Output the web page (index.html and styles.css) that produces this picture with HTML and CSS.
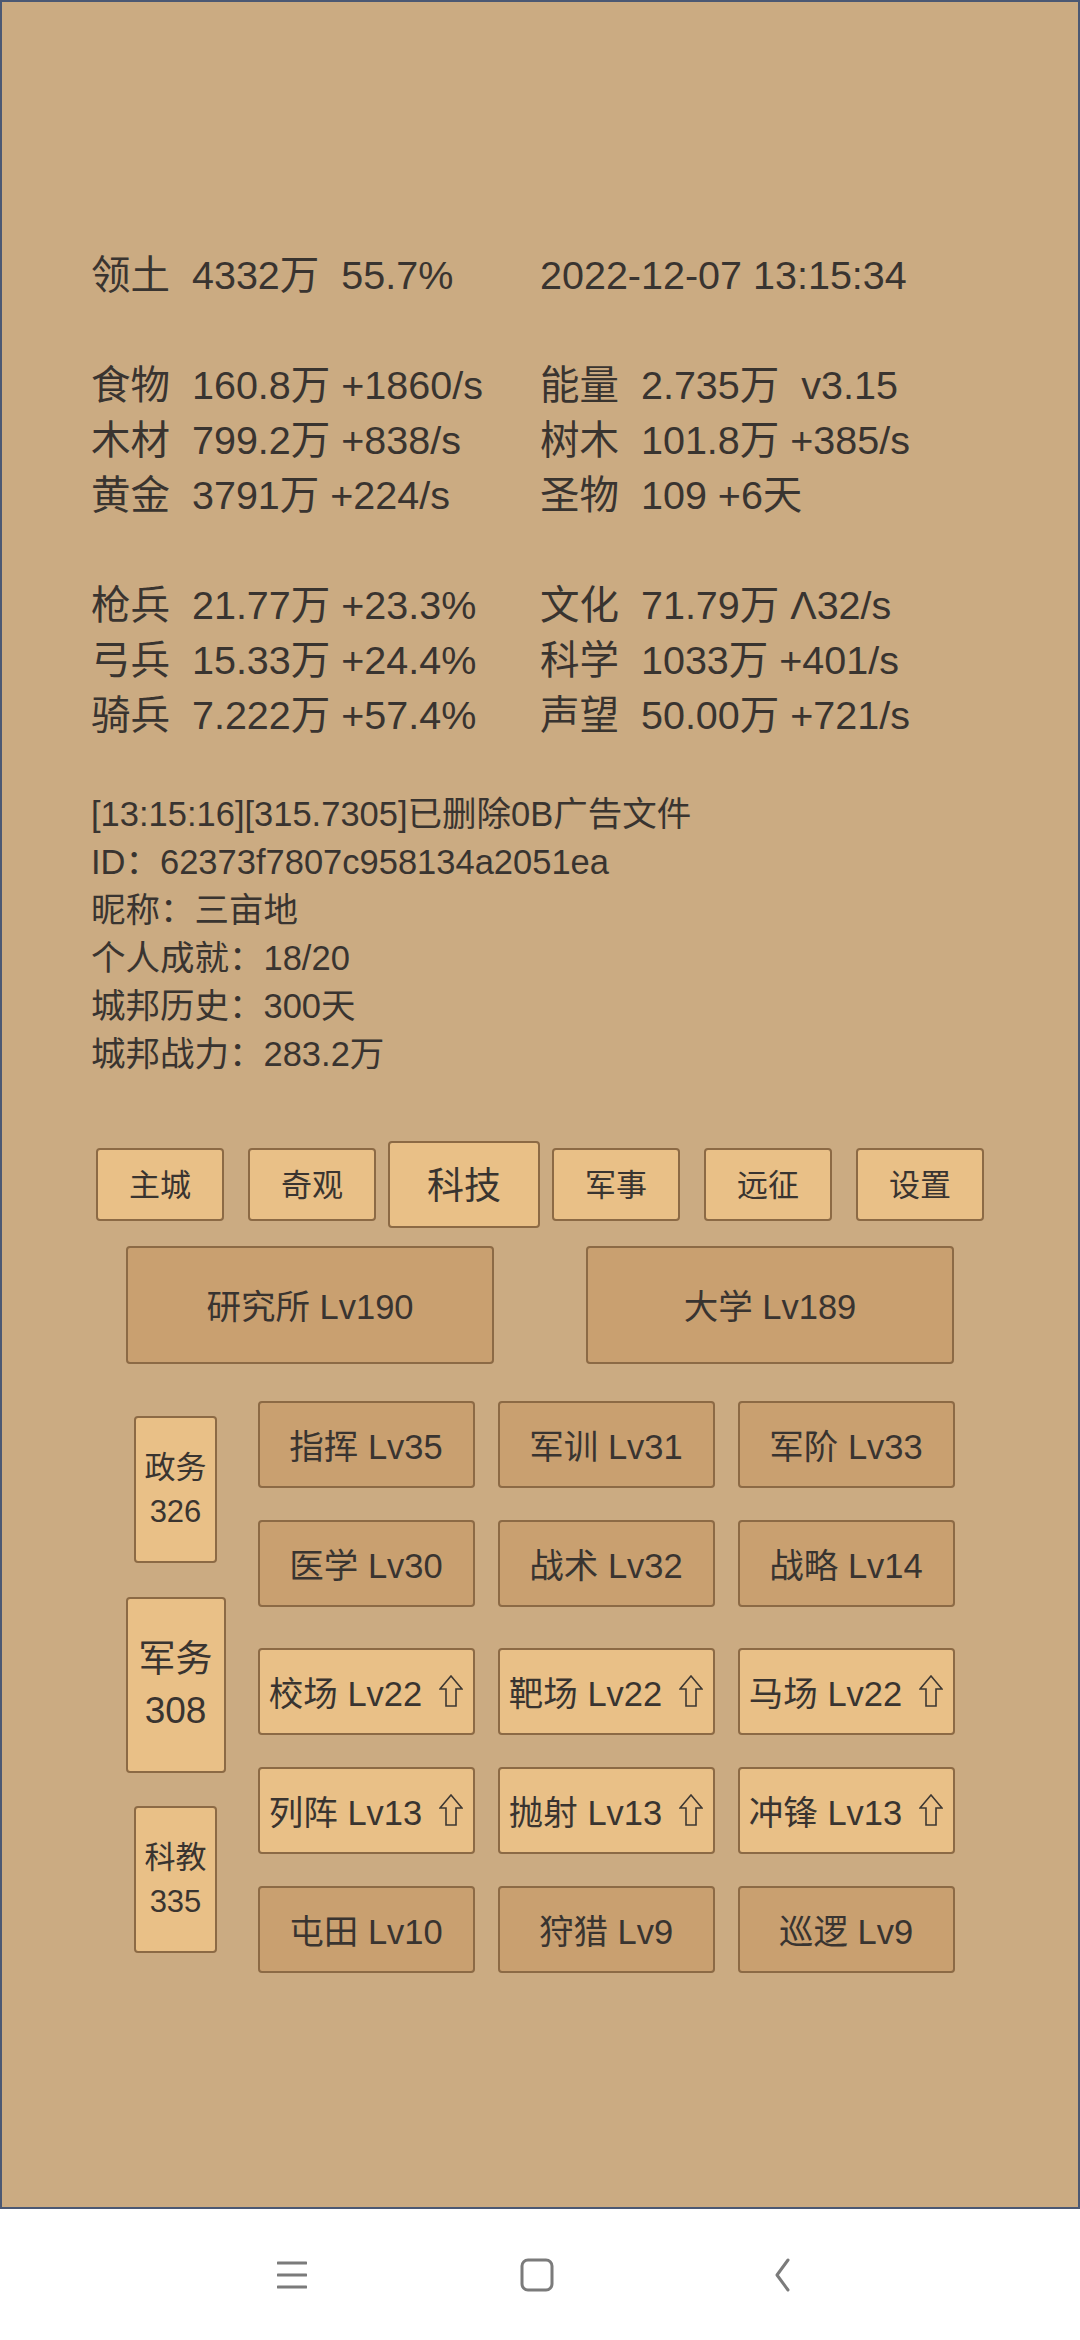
FILE: index.html
```html
<!DOCTYPE html>
<html lang="zh-CN">
<head>
  <meta charset="UTF-8">
  <title>城邦</title>
  <meta name="viewport" content="width=device-width,initial-scale=1">
  <link rel="stylesheet" href="styles.css">
</head>
<body>

<div class="panel">

  <div class="stats">
    <div class="stat-group">
      <div class="cell">领土  4332万  55.7%</div>
      <div class="cell">2022-12-07 13:15:34</div>
    </div>
    <div class="stat-group">
      <div class="cell">食物  160.8万 +1860/s</div>
      <div class="cell">能量  2.735万  v3.15</div>
      <div class="cell">木材  799.2万 +838/s</div>
      <div class="cell">树木  101.8万 +385/s</div>
      <div class="cell">黄金  3791万 +224/s</div>
      <div class="cell">圣物  109 +6天</div>
    </div>
    <div class="stat-group">
      <div class="cell">枪兵  21.77万 +23.3%</div>
      <div class="cell">文化  71.79万 Λ32/s</div>
      <div class="cell">弓兵  15.33万 +24.4%</div>
      <div class="cell">科学  1033万 +401/s</div>
      <div class="cell">骑兵  7.222万 +57.4%</div>
      <div class="cell">声望  50.00万 +721/s</div>
    </div>
  </div>

  <div class="log">
    <div>[13:15:16][315.7305]已删除0B广告文件</div>
    <div>ID：62373f7807c958134a2051ea</div>
    <div>昵称：三亩地</div>
    <div>个人成就：18/20</div>
    <div>城邦历史：300天</div>
    <div>城邦战力：283.2万</div>
  </div>

  <div class="tabs">
    <button class="tab">主城</button>
    <button class="tab">奇观</button>
    <button class="tab on">科技</button>
    <button class="tab">军事</button>
    <button class="tab">远征</button>
    <button class="tab">设置</button>
  </div>

  <div class="halls">
    <button class="btn dark hall">研究所 Lv190</button>
    <button class="btn dark hall">大学 Lv189</button>
  </div>

  <div class="lower">
    <div class="side">
      <div class="side-slot"><button class="side-btn">政务<br>326</button></div>
      <div class="side-slot"><button class="side-btn on">军务<br>308</button></div>
      <div class="side-slot"><button class="side-btn">科教<br>335</button></div>
    </div>

    <div class="skills">
      <div class="skill-grid">
        <button class="btn dark">指挥 Lv35</button>
        <button class="btn dark">军训 Lv31</button>
        <button class="btn dark">军阶 Lv33</button>
        <button class="btn dark">医学 Lv30</button>
        <button class="btn dark">战术 Lv32</button>
        <button class="btn dark">战略 Lv14</button>
      </div>
      <div class="skill-grid second">
        <button class="btn light">校场 Lv22<svg class="up" viewBox="0 0 24 32"><polygon points="12,1 23,14 17,14 17,31 7,31 7,14 1,14"/></svg></button>
        <button class="btn light">靶场 Lv22<svg class="up" viewBox="0 0 24 32"><polygon points="12,1 23,14 17,14 17,31 7,31 7,14 1,14"/></svg></button>
        <button class="btn light">马场 Lv22<svg class="up" viewBox="0 0 24 32"><polygon points="12,1 23,14 17,14 17,31 7,31 7,14 1,14"/></svg></button>
        <button class="btn light">列阵 Lv13<svg class="up" viewBox="0 0 24 32"><polygon points="12,1 23,14 17,14 17,31 7,31 7,14 1,14"/></svg></button>
        <button class="btn light">抛射 Lv13<svg class="up" viewBox="0 0 24 32"><polygon points="12,1 23,14 17,14 17,31 7,31 7,14 1,14"/></svg></button>
        <button class="btn light">冲锋 Lv13<svg class="up" viewBox="0 0 24 32"><polygon points="12,1 23,14 17,14 17,31 7,31 7,14 1,14"/></svg></button>
        <button class="btn dark">屯田 Lv10</button>
        <button class="btn dark">狩猎 Lv9</button>
        <button class="btn dark">巡逻 Lv9</button>
      </div>
    </div>
  </div>

</div>

<div class="navbar">
  <div class="nav-slot">
    <svg width="30" height="28" viewBox="0 0 30 28"><path d="M1 2h28M1 14h28M1 26h28" stroke="#7b7b7b" stroke-width="3" stroke-linecap="round"/></svg>
  </div>
  <div class="nav-slot">
    <svg width="34" height="34" viewBox="0 0 34 34"><rect x="2" y="2" width="30" height="30" rx="6" fill="none" stroke="#7b7b7b" stroke-width="3"/></svg>
  </div>
  <div class="nav-slot">
    <svg width="18" height="34" viewBox="0 0 18 34"><path d="M15 2L4 17l11 15" fill="none" stroke="#7b7b7b" stroke-width="3" stroke-linecap="round" stroke-linejoin="round"/></svg>
  </div>
</div>

</body>
</html>
```

FILE: styles.css
```css
body {
  margin: 0;
  width: 1080px;
  height: 2340px;
  background: #fff;
  font-family: "Liberation Sans", "Noto Sans CJK SC", sans-serif;
  color: #393430;
  overflow: hidden;
}
.panel {
  box-sizing: border-box;
  height: 2209px;
  background: #cbab82;
  border: 2px solid #4b5873;
}
.stats {
  padding: 246px 0 0 89px;
  font-size: 39.5px;
  line-height: 55px;
}
.stat-group {
  display: grid;
  grid-template-columns: 449px auto;
}
.stat-group + .stat-group { margin-top: 55px; }
.cell { white-space: pre; }
.log {
  margin-top: 47px;
  padding-left: 89px;
  font-size: 34.5px;
  line-height: 48px;
}
button {
  font-family: inherit;
  color: inherit;
  padding: 0;
  margin: 0;
  cursor: pointer;
}
.tabs {
  display: flex;
  justify-content: center;
  align-items: center;
  height: 87px;
  margin-top: 63px;
}
.tab {
  width: 128px;
  height: 73px;
  margin: 0 12px;
  padding-bottom: 4px;
  background: #e9c087;
  border: 2px solid #8c6a45;
  border-radius: 4px;
  font-size: 31px;
}
.tab.on {
  width: 152px;
  height: 87px;
  margin: 0;
  font-size: 37px;
}
.btn {
  height: 87px;
  padding-bottom: 2px;
  border: 2px solid #8c6a45;
  border-radius: 4px;
  font-size: 34.5px;
  display: flex;
  align-items: center;
  justify-content: center;
}
.btn.dark { background: #c9a070; }
.btn.light { background: #e9c087; }
.halls {
  display: flex;
  justify-content: center;
  gap: 92px;
  margin-top: 18px;
}
.hall {
  width: 368px;
  height: 118px;
}
.lower {
  display: flex;
  justify-content: center;
  gap: 32px;
  margin-top: 28px;
}
.side {
  width: 100px;
  display: flex;
  flex-direction: column;
}
.side-slot {
  height: 195px;
  display: flex;
  align-items: center;
  justify-content: center;
}
.side-btn {
  width: 83px;
  height: 147px;
  background: #e9c087;
  border: 2px solid #8c6a45;
  border-radius: 4px;
  font-size: 31px;
  line-height: 44px;
}
.side-btn.on {
  width: 100px;
  height: 176px;
  font-size: 37px;
  line-height: 51px;
}
.skills { padding-top: 9px; }
.skill-grid {
  display: grid;
  grid-template-columns: repeat(3, 217px);
  gap: 32px 23px;
}
.skill-grid.second { margin-top: 41px; }
.up {
  width: 24px;
  height: 32px;
  margin-left: 17px;
  fill: none;
  stroke: #3d3732;
  stroke-width: 1.6;
  stroke-linejoin: miter;
}
.navbar {
  display: flex;
  justify-content: center;
  align-items: center;
  height: 131px;
  padding-right: 6px;
}
.nav-slot {
  width: 245px;
  display: flex;
  justify-content: center;
}
```
